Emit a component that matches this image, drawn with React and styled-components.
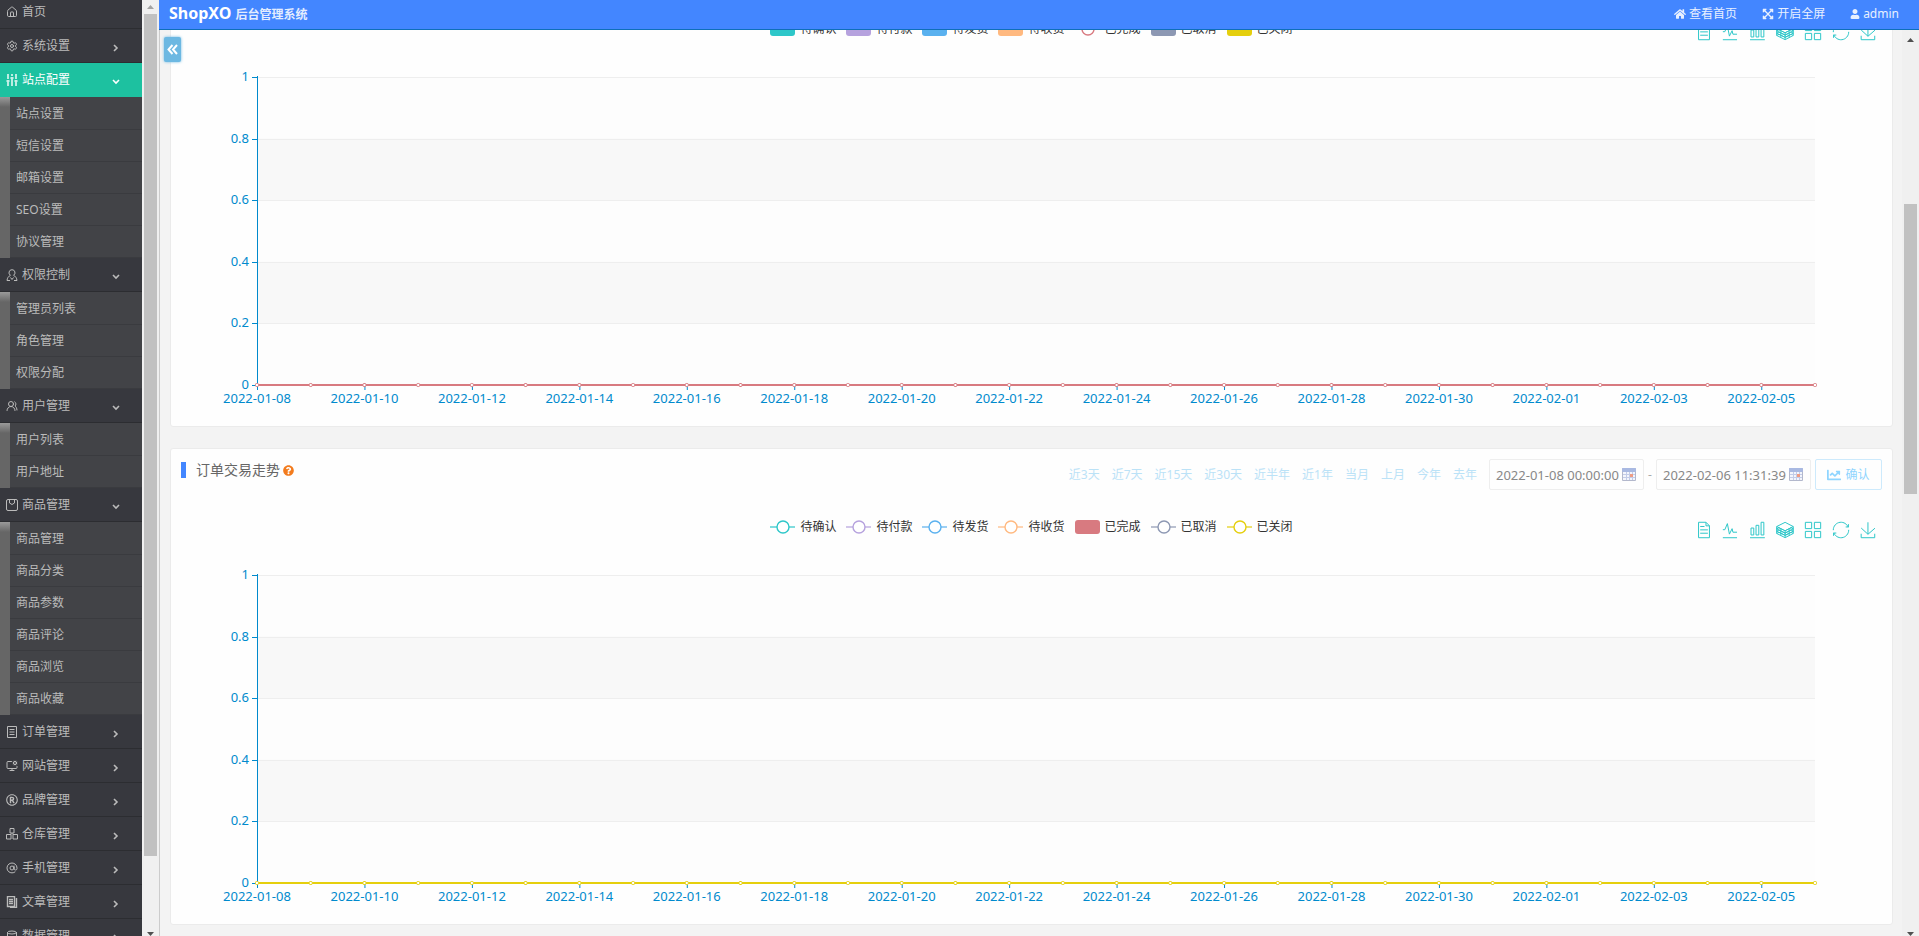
import React from "react";
import styled, { createGlobalStyle, css } from "styled-components";
import { House, Settings, UsersRound, MonitorCog, AtSign, Database } from "lucide-react";
import {
  FaHome, FaExpandArrowsAlt, FaUser, FaChartLine, FaQuestionCircle, FaRegRegistered,
} from "react-icons/fa";

const GlobalStyle = createGlobalStyle`
  *, *::before, *::after { box-sizing: border-box; }
  body {
    margin: 0;
    background: #f3f3f3;
    color: #666;
    font: 12px/18px "Noto Sans", "Noto Sans CJK SC", sans-serif;
  }
  ul { list-style: none; margin: 0; padding: 0; }
  a { color: inherit; text-decoration: none; }
  button, input { font: inherit; color: inherit; }
`;

const Shell = styled.div`
  display: flex;
  height: 100vh;
  overflow: hidden;
`;

/* ---------- sidebar ---------- */

const Sidebar = styled.nav`
  flex: none;
  width: 142px;
  overflow: hidden;
  background: #37383e;
  color: #bbb;
`;

const MenuLink = styled.a`
  display: flex;
  align-items: center;
  height: ${(p) => (p.$first ? 29 : 34)}px;
  padding: 0 22px ${(p) => (p.$first ? 4 : 0)}px 6px;
  border-bottom: 1px solid #2c2d31;
  ${(p) => p.$active && css`
    background: #1dc1a0;
    border-color: #1dc1a0;
    color: #fff;
  `}
`;

const MenuIcon = styled.span`
  display: flex;
  width: 12px;
  margin-right: 4px;
`;

const MenuText = styled.span`
  flex: 1;
`;

const Arrow = styled.svg`
  width: 8px;
  height: 8px;
  margin-top: 4px;
  fill: none;
  stroke: currentColor;
  stroke-width: 1.6;
`;

const SubMenu = styled.ul`
  padding: 1px 0 0 10px;
  background: #424347 linear-gradient(#9a9a9a, #666 10px) no-repeat left / 10px 100%;
`;

const SubLink = styled.a`
  display: block;
  height: 32px;
  padding: 7px 6px;
  border-bottom: 1px solid #3a3b3f;
`;

const Glyph = styled.svg`
  width: 12px;
  height: 12px;
  fill: none;
  stroke: currentColor;
  stroke-width: ${(p) => (p.$bold ? 1.4 : 1)};
`;

const glyph = (d, bold) => () => (
  <Glyph viewBox="0 0 12 12" $bold={bold} aria-hidden="true"><path d={d} /></Glyph>
);

const SlidersIcon = glyph("M2 0v5M2 8v4M.5 7h3M6 0v2M6 5v7M4.500 4h3M10 0v5M10 8v4M8.500 7h3", true);
const PersonIcon = glyph("M6 .7a3 3 0 0 0-1.500 5.600C2.500 7.300 1.200 9 1 11.500h3M6 .7a3 3 0 0 1 1.500 5.600C9.500 7.300 10.800 9 11 11.500H8M4.500 8.500l1.500 2l1.500-2");
const BagIcon = glyph("M2 .5h8q1.500 0 1.500 1.500v8q0 1.500-1.500 1.500H2Q.5 11.500.5 10V2Q.5.5 2 .5zM3.500 1v3q2.500 3 5 0V1");
const ListIcon = glyph("M1.500.5h9v11h-9zM3.500 3.500h5M3.500 6h5M3.500 8.500h5");
const StoreIcon = glyph("M4 .5h4v4.500H4zM.5 6.500H5V11H.5zM7 6.500h4.500V11H7zM6 5v1.500");
const PagesIcon = glyph("M1.500.5h7v10h-7zM3 3.500h4M3 5.500h4M3 7.500h4M10.500 2v9.500H4", true);

const menu = [
  { text: "首页", icon: House },
  { text: "系统设置", icon: Settings, arrow: "right" },
  { text: "站点配置", icon: SlidersIcon, arrow: "down", active: true,
    items: ["站点设置", "短信设置", "邮箱设置", "SEO设置", "协议管理"] },
  { text: "权限控制", icon: PersonIcon, arrow: "down", items: ["管理员列表", "角色管理", "权限分配"] },
  { text: "用户管理", icon: UsersRound, arrow: "down", items: ["用户列表", "用户地址"] },
  { text: "商品管理", icon: BagIcon, arrow: "down",
    items: ["商品管理", "商品分类", "商品参数", "商品评论", "商品浏览", "商品收藏"] },
  { text: "订单管理", icon: ListIcon, arrow: "right" },
  { text: "网站管理", icon: MonitorCog, arrow: "right" },
  { text: "品牌管理", icon: FaRegRegistered, arrow: "right" },
  { text: "仓库管理", icon: StoreIcon, arrow: "right" },
  { text: "手机管理", icon: AtSign, arrow: "right" },
  { text: "文章管理", icon: PagesIcon, arrow: "right" },
  { text: "数据管理", icon: Database, arrow: "right" },
];

function Menu() {
  return (
    <Sidebar aria-label="主菜单">
      <ul>
        {menu.map(({ text, icon: Icon, arrow, active, items }, i) => (
          <li key={text}>
            <MenuLink href="#" $first={i === 0} $active={active}>
              <MenuIcon><Icon size={12} /></MenuIcon>
              <MenuText>{text}</MenuText>
              {arrow && (
                <Arrow viewBox="0 0 8 8" aria-hidden="true">
                  <path d={arrow === "right" ? "M2 1l3 3l-3 3" : "M1 2l3 3l3-3"} />
                </Arrow>
              )}
            </MenuLink>
            {items && (
              <SubMenu>
                {items.map((item) => (
                  <li key={item}><SubLink href="#">{item}</SubLink></li>
                ))}
              </SubMenu>
            )}
          </li>
        ))}
      </ul>
    </Sidebar>
  );
}

/* ---------- scroll bars ---------- */

const Track = styled.div`
  display: flex;
  flex-direction: column;
  flex: none;
  align-items: center;
  width: 17px;
  background: #f0f0f0;
`;

const Cap = styled.span`
  flex: none;
  display: flex;
  align-items: center;
  height: ${(p) => p.$size}px;
  overflow: hidden;
  color: ${(p) => (p.$muted ? "#a3a3a3" : "#505050")};
`;

const Rail = styled.span`
  flex: ${(p) => (p.$length ? `0 1 ${p.$length}%` : 1)};
`;

const Thumb = styled.span`
  flex: 0 0 ${(p) => p.$length}%;
  width: 13px;
  background: #c1c1c1;
`;

function ScrollBar({ before, length, muted, cap }) {
  return (
    <Track aria-hidden="true">
      <Cap $size={cap} $muted={muted}>
        <svg width="7" height="4"><path d="M0 4L3.5 0L7 4z" fill="currentColor" /></svg>
      </Cap>
      {before && <Rail $length={before} />}
      <Thumb $length={length} />
      <Rail />
      <Cap $size={4}>
        <svg width="7" height="4"><path d="M0 0h7L3.5 4z" fill="currentColor" /></svg>
      </Cap>
    </Track>
  );
}

/* ---------- top bar ---------- */

const Workspace = styled.div`
  flex: 1;
  min-width: 0;
  display: flex;
  flex-direction: column;
`;

const TopBar = styled.header`
  position: relative;
  z-index: 2;
  flex: none;
  display: flex;
  align-items: center;
  height: 30px;
  padding: 0 20px 1px 10px;
  background: #4386ff;
  border-bottom: 1px solid #0e6fb8;
  color: #e8f0ff;
`;

const Brand = styled.h1`
  flex: 1;
  display: flex;
  align-items: baseline;
  gap: 4px;
  margin: 0;
  font-size: 16px;
  line-height: 24px;
  color: #fff;
`;

const BrandSub = styled.small`
  font-size: 12px;
  color: #e3edff;
`;

const TopLinks = styled.div`
  display: flex;
  gap: 25px;
`;

const TopLink = styled.a`
  display: flex;
  align-items: center;
  gap: 3px;
`;

/* ---------- content ---------- */

const Body = styled.div`
  flex: 1;
  display: flex;
  min-height: 0;
  border-left: 1px solid #ccc;
`;

const Content = styled.main`
  position: relative;
  flex: 1;
  min-width: 0;
  overflow: hidden;
  padding: 0 9px 0 10px;
`;

const Collapse = styled.button`
  position: absolute;
  z-index: 1;
  top: 7px;
  left: 4px;
  display: flex;
  align-items: center;
  justify-content: center;
  width: 17px;
  height: 25px;
  padding: 0;
  border: 0;
  border-radius: 2px;
  background: #6cb8e2;
  box-shadow: 0 0 3px #6cb8e2;
  color: #fff;
`;

const Card = styled.section`
  margin: ${(p) => (p.$scrolled ? "-19px 0 21px" : "0")};
  padding: 10px 10px 0;
  background: #fefefe;
  border: 1px solid #ebebeb;
  border-radius: 3px;
`;

const CardHead = styled.div`
  display: flex;
  align-items: flex-start;
  justify-content: space-between;
  height: 61px;
`;

const CardTitle = styled.h2`
  display: flex;
  align-items: center;
  gap: 3px;
  margin: 3px 0 0;
  padding-left: 10px;
  border-left: 5px solid #4386ff;
  font-size: 14px;
  font-weight: 400;
  line-height: 16px;
  svg { color: #f37b1d; }
`;

const Filters = styled.form`
  display: flex;
  align-items: center;
  color: #aaa;
`;

const Ranges = styled.div`
  display: flex;
  gap: 12px;
  margin-right: 12px;
  color: #bbe2f7;
`;

const DateBox = styled.label`
  display: flex;
  align-items: center;
  width: 155px;
  height: 31px;
  padding: 0 7px 0 6px;
  border: 1px solid #eee;
  border-radius: 2px;
  color: #888;
`;

const DateInput = styled.input`
  flex: 1;
  min-width: 0;
  padding: 0;
  border: 0;
  outline: 0;
  background: none;
  font-size: 13px;
`;

const Dash = styled.span`
  width: 12px;
  text-align: center;
`;

const Confirm = styled.button`
  display: flex;
  align-items: center;
  justify-content: center;
  gap: 4px;
  width: 67px;
  height: 31px;
  margin-left: 4px;
  padding: 0;
  border: 1px solid #cdeafc;
  border-radius: 2px;
  background: #fefefe;
  color: #8fd5ff;
`;

const CalendarIcon = () => (
  <svg width="14" height="13" viewBox="0 0 14 13" aria-hidden="true">
    <rect width="14" height="13" rx="1" fill="#b3b8cc" />
    <rect width="14" height="4" rx="1" fill="#a9b9e2" />
    <path d="M1 4h12v8H1z" fill="#f3f5fc" />
    <path d="M1 6.5h12M1 9.5h12M4.5 4v8M7.5 4v8M10.5 4v8" stroke="#c3cce8" />
    <path d="M8 6h3v3H8z" fill="#ee9c84" />
  </svg>
);

/* ---------- chart ---------- */

const ChartTop = styled.div`
  display: grid;
  grid-template-columns: 1fr auto 1fr;
  align-items: start;
  height: 55px;
`;

const Legend = styled.ul`
  grid-column: 2;
  display: flex;
  gap: 10px;
  color: #333;
  line-height: 14px;
`;

const LegendItem = styled.li`
  display: flex;
  align-items: center;
  gap: 5px;
`;

const Swatch = styled.span`
  width: 25px;
  height: 14px;
  border-radius: 3px;
  background: ${(p) => p.$color};
`;

const Tools = styled.div`
  display: flex;
  justify-content: flex-end;
  gap: 12px;
  padding: 2px 7px 0 0;
`;

const Tool = styled.button`
  display: flex;
  padding: 0;
  border: 0;
  background: none;
  color: #2ec7c9;
  svg { overflow: visible; fill: none; stroke: currentColor; }
  path { vector-effect: non-scaling-stroke; }
`;

const PlotRow = styled.div`
  margin: 0 67px 40px 76px;
`;

const Plot = styled.svg`
  display: block;
  width: 100%;
  height: 309px;
  overflow: visible;
  font-size: 13px;
  .grid { stroke: #eee; }
  .axis { stroke: #008acd; }
  text { fill: #008acd; }
`;

const series = [
  ["待确认", "#2ec7c9"],
  ["待付款", "#b6a2de"],
  ["待发货", "#5ab1ef"],
  ["待收货", "#ffb980"],
  ["已完成", "#d87a80"],
  ["已取消", "#8d98b3"],
  ["已关闭", "#e5cf0d"],
];

const tools = [
  ["数据视图", 12, "M17.5,17.3H33M45.4,29.5h-28M11.5,2v56H51V14.8L38.4,2H11.5zM38.4,2.2v12.7H51M45.4,41.7h-28", "9.5 1 43.5 58"],
  ["折线图", 16, "M4.1,28.9h7.1l9.3-22l7.4,38l9.7-19.7l3,12.8h14.9M4.1,58h51.4", "1 1 58 58"],
  ["柱形图", 15, "M6.7,22.9h10V48h-10V22.9zM24.9,13h10v35h-10V13zM43.2,2h10v46h-10V2zM3.1,58h53.7", "3 1 54.4 58"],
  ["堆积", 16, "M8.2,38.4l-8.4,4.1l30.6,15.3L60,42.5l-8.1-4.1l-21.5,11L8.2,38.4zM51.9,30l-8.1,4.2l-13.4,6.9l-13.9-6.9L8.2,30l-8.4,4.2l8.4,4.2l22.2,11l21.5-11l8.1-4.2L51.9,30zM51.9,21.7l-8.1,4.2L35.7,30l-5.3,2.8L24.9,30l-8.4-4.1l-8.3-4.2l-8.4,4.2L8.2,30l8.3,4.2l13.9,6.9l13.4-6.9l8.1-4.2l8.1-4.1L51.9,21.7zM30.4,2.2L-0.2,17.5l8.4,4.1l8.3,4.2l8.4,4.2l5.5,2.7l5.3-2.7l8.1-4.2l8.1-4.2l8.1-4.1L30.4,2.2zM-0.2,17.5v25M60,17.5v25M30.4,33v24M15,26v24M45,26v24", "1 1 58 58"],
  ["平铺", 16, "M2.3,2.2h22.8V25H2.3V2.2zM35,2.2h22.8V25H35V2.2zM2.3,35h22.8v22.8H2.3V35zM35,35h22.8v22.8H35V35z", "1 1 58 58"],
  ["还原", 16, "M47,18.9h9.8V8.7M56.3,20.1C52.1,9,40.5,0.6,26.8,2.1C12.6,3.7,1.6,16.2,2.1,30.6M13,41.1H3.1v10.2M3.7,39.9c4.2,11.1,15.8,19.5,29.5,18c14.2-1.6,25.2-14.1,24.7-28.5", "1 1 58 58"],
  ["保存为图片", 14, "M4.7,22.9L29.3,45.5L54.7,23.4M4.6,43.6L4.6,58L53.8,58L53.8,43.6M29.2,45.1L29.2,2", "4 1 50.8 58"],
];

const DAYS = 30;
const days = Array.from({ length: DAYS }, (_, i) =>
  new Date(Date.UTC(2022, 0, 8 + i)).toISOString().slice(0, 10));
const ticks = ["1", "0.8", "0.6", "0.4", "0.2", "0"];
const STEP = 308 / 5;

function Chart({ barSeries, color }) {
  return (
    <>
      <ChartTop>
        <Legend>
          {series.map(([name, c]) => (
            <LegendItem key={name}>
              {barSeries(name) ? <Swatch $color={c} /> : (
                <svg width="25" height="14" aria-hidden="true">
                  <path d="M0 7h25" stroke={c} strokeWidth="2" opacity="0.6" />
                  <circle cx="13" cy="7" r="6" fill="#fff" stroke={c} strokeWidth="1.4" />
                </svg>
              )}
              {name}
            </LegendItem>
          ))}
        </Legend>
        <Tools>
          {tools.map(([label, width, d, box]) => (
            <Tool key={label} type="button" aria-label={label}>
              <svg width={width} height="16" viewBox={box}><path d={d} /></svg>
            </Tool>
          ))}
        </Tools>
      </ChartTop>
      <PlotRow>
        <Plot role="img" aria-label="走势图">
          {ticks.slice(1).map((t, i) => (
            <rect key={t} x="0" y={i * STEP} width="100%" height={STEP} fill={i % 2 ? "#f8f8f8" : "#fdfdfd"} />
          ))}
          {ticks.map((t, i) => {
            const y = Math.round(i * STEP) + 0.5;
            return (
              <g key={t}>
                <line className="grid" x1="0" x2="100%" y1={y} y2={y} />
                <line className="axis" x1="-5" x2="0" y1={y} y2={y} />
                <text x="-8" y={y + 3} textAnchor="end">{t}</text>
              </g>
            );
          })}
          <line className="axis" x1="0.5" x2="0.5" y1="-1" y2="309" />
          {days.map((day, i) => (
            <svg key={day} x={`${(i / (DAYS - 1)) * 100}%`} overflow="visible">
              {i % 2 === 0 && (
                <>
                  <line className="axis" x1="0.5" x2="0.5" y1="308" y2="313" />
                  <text x="0" y="326" textAnchor="middle">{day}</text>
                </>
              )}
            </svg>
          ))}
          <line x1="0" x2="100%" y1="308" y2="308" stroke={color} strokeWidth="2" />
          {days.map((day, i) => (
            <svg key={day} x={`${(i / (DAYS - 1)) * 100}%`} overflow="visible">
              <rect x="-1.5" y="306.5" width="3" height="3" rx="1" fill="#fff" stroke={color} />
            </svg>
          ))}
        </Plot>
      </PlotRow>
    </>
  );
}

const ranges = ["近3天", "近7天", "近15天", "近30天", "近半年", "近1年", "当月", "上月", "今年", "去年"];

export default function App() {
  return (
    <>
      <GlobalStyle />
      <Shell>
        <Menu />
        <ScrollBar length={90} muted cap={14} />
        <Workspace>
          <TopBar>
            <Brand>ShopXO <BrandSub>后台管理系统</BrandSub></Brand>
            <TopLinks>
              <TopLink href="#"><FaHome size={12} />查看首页</TopLink>
              <TopLink href="#"><FaExpandArrowsAlt size={12} />开启全屏</TopLink>
              <TopLink href="#"><FaUser size={10} />admin</TopLink>
            </TopLinks>
          </TopBar>
          <Body>
            <Content>
              <Collapse type="button" aria-label="收起菜单">
                <svg width="11" height="11" viewBox="0 0 11 11" fill="none" stroke="currentColor" strokeWidth="2">
                  <path d="M5.5 1L1.5 5.5L5.5 10M10 1L6 5.5L10 10" />
                </svg>
              </Collapse>
              <Card $scrolled>
                <Chart barSeries={(name) => name !== "已完成"} color="#d87a80" />
              </Card>
              <Card>
                <CardHead>
                  <CardTitle>订单交易走势<FaQuestionCircle size={11} /></CardTitle>
                  <Filters onSubmit={(e) => e.preventDefault()}>
                    <Ranges>{ranges.map((r) => <a href="#" key={r}>{r}</a>)}</Ranges>
                    <DateBox>
                      <DateInput aria-label="开始时间" defaultValue="2022-01-08 00:00:00" />
                      <CalendarIcon />
                    </DateBox>
                    <Dash>-</Dash>
                    <DateBox>
                      <DateInput aria-label="结束时间" defaultValue="2022-02-06 11:31:39" />
                      <CalendarIcon />
                    </DateBox>
                    <Confirm type="submit"><FaChartLine size={14} />确认</Confirm>
                  </Filters>
                </CardHead>
                <Chart barSeries={(name) => name === "已完成"} color="#e5cf0d" />
              </Card>
            </Content>
            <ScrollBar before={17} length={32} cap={20} />
          </Body>
        </Workspace>
      </Shell>
    </>
  );
}
